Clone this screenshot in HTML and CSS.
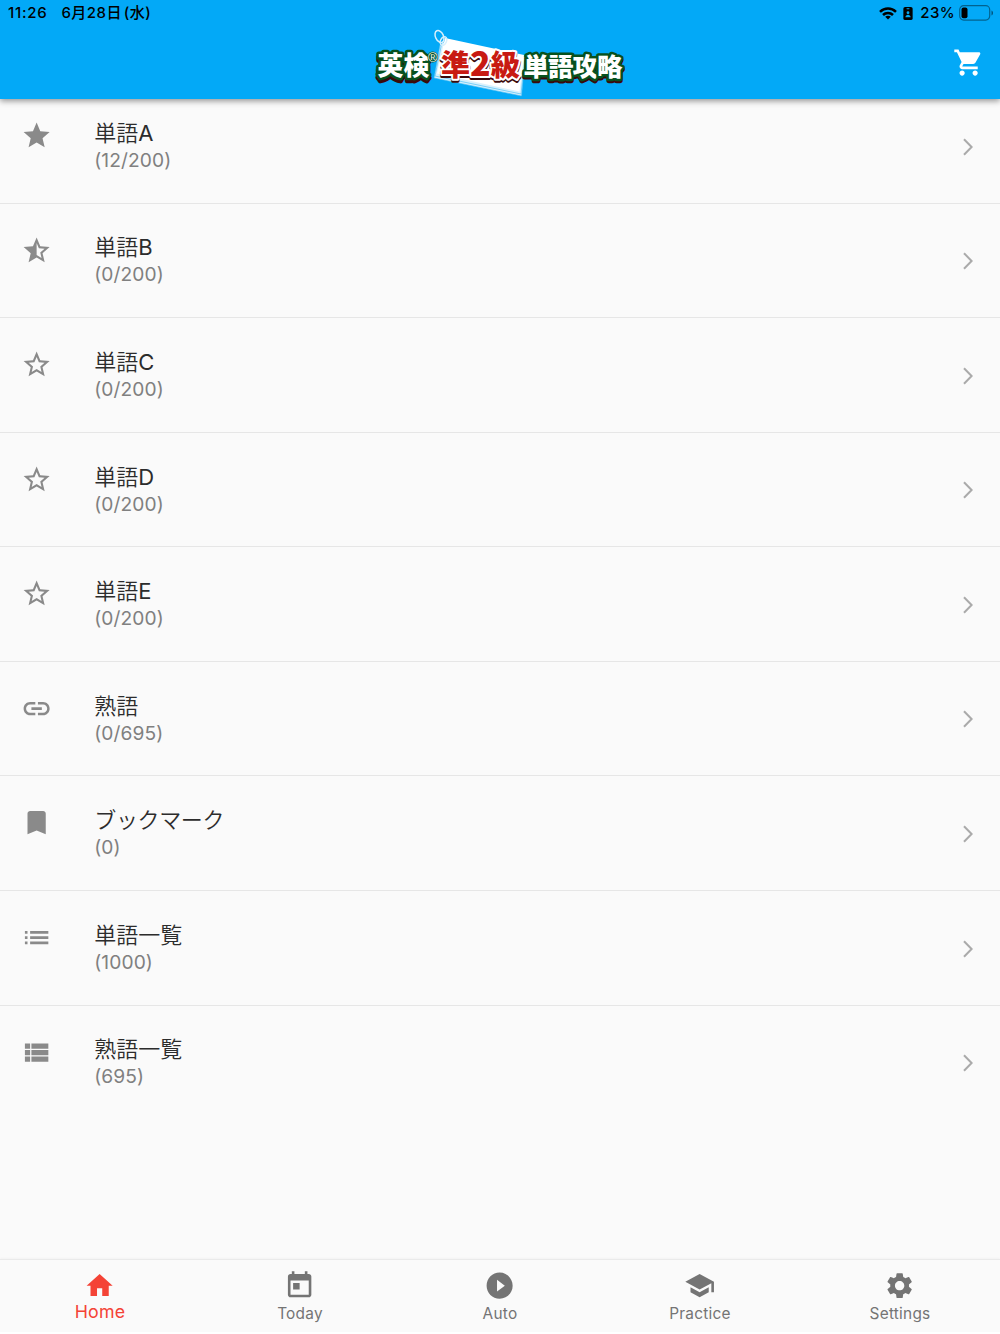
FILE: index.html
```html
<!DOCTYPE html>
<html lang="ja">
<head>
<meta charset="utf-8">
<title>英検準2級 単語攻略</title>
<link rel="stylesheet" href="styles.css">
</head>
<body>
<svg class="defs" aria-hidden="true">
  <symbol id="star" viewBox="0 0 24 24"><path d="M12 17.27L18.18 21l-1.64-7.03L22 9.24l-7.19-.61L12 2 9.19 8.63 2 9.24l5.46 4.73L5.82 21z"/></symbol>
  <symbol id="star-half" viewBox="0 0 24 24"><path d="M22 9.24l-7.19-.62L12 2 9.19 8.63 2 9.24l5.46 4.73L5.82 21 12 17.27 18.18 21l-1.63-7.03L22 9.24zM12 15.4V6.1l1.71 4.04 4.38.38-3.32 2.88 1 4.28L12 15.4z"/></symbol>
  <symbol id="star-outline" viewBox="0 0 24 24"><path d="M22 9.24l-7.19-.62L12 2 9.19 8.63 2 9.24l5.46 4.73L5.82 21 12 17.27 18.18 21l-1.63-7.03L22 9.24zM12 15.4l-3.76 2.27 1-4.28-3.32-2.88 4.38-.38L12 6.1l1.71 4.04 4.38.38-3.32 2.88 1 4.28L12 15.4z"/></symbol>
  <symbol id="link" viewBox="0 0 24 24"><path d="M3.9 12c0-1.71 1.39-3.1 3.1-3.1h4V7H7c-2.76 0-5 2.24-5 5s2.24 5 5 5h4v-1.900H7c-1.710 0-3.100-1.390-3.100-3.100zM8 13h8v-2H8v2zm9-6h-4v1.900h4c1.710 0 3.100 1.390 3.100 3.100s-1.390 3.100-3.100 3.100h-4V17h4c2.760 0 5-2.240 5-5s-2.240-5-5-5z"/></symbol>
  <symbol id="bookmark" viewBox="0 0 24 24"><path d="M17 3H7c-1.100 0-2 .9-2 2v16l7-3 7 3V5c0-1.100-.9-2-2-2z"/></symbol>
  <symbol id="list" viewBox="0 0 24 24"><path d="M3 13h2v-2H3v2zm0 4h2v-2H3v2zm0-8h2V7H3v2zm4 4h14v-2H7v2zm0 4h14v-2H7v2zM7 7v2h14V7H7z"/></symbol>
  <symbol id="view-list" viewBox="0 0 24 24"><path d="M3 14h4v-4H3v4zm0 5h4v-4H3v4zM3 9h4V5H3v4zm5 5h13v-4H8v4zm0 5h13v-4H8v4zM8 5v4h13V5H8z"/></symbol>
  <symbol id="chevron" viewBox="0 0 12 20"><path d="M2 2.200 9.600 10 2 17.800" fill="none" stroke="currentColor" stroke-width="2"/></symbol>
</svg>

<div class="app">
  <header class="appbar">
    <div class="status">
      <span class="clock">11:26</span>
      <span class="date">6月28日<span class="weekday">(水)</span></span>
      <svg class="wifi" viewBox="0 0 18 13"><g fill="none" stroke="#000" stroke-width="2.500"><path d="M1 4.800C5.500.4 12.500.4 17 4.800"/><path d="M4 8C6.800 5.200 11.200 5.200 14 8"/></g><path d="M6.200 9.700C7.800 8.300 10.200 8.300 11.800 9.700L9 12.500z"/></svg>
      <svg class="badge" viewBox="0 0 10 14"><rect width="10" height="14" rx="2"/><g fill="#03a9f4"><rect x="3.300" y="1.400" width="3.400" height="1" rx=".5"/><circle cx="5" cy="6.200" r="1.500"/><path d="M2.200 11c0-3.600 5.600-3.600 5.600 0z"/></g></svg>
      <span class="percent">23%</span>
      <svg class="battery" viewBox="0 0 35 16"><rect x=".7" y=".7" width="30" height="14.400" rx="4" fill="none" stroke="#000" stroke-opacity=".42" stroke-width="1.200"/><rect x="2.500" y="2.600" width="6" height="10.600" rx="2"/><path d="M32.500 5.500c2 .8 2 4.200 0 5z" fill-opacity=".5"/></svg>
    </div>
    <svg class="logo" viewBox="0 0 260 85" role="img" aria-label="英検準2級 単語攻略">
      <g fill="#d9f1fd" stroke="#3db9f3" stroke-width=".6">
        <path d="M70 20 64 53 151.500 71 155 34z"/>
        <path d="M72 17 65 51 151 69 155 32z"/>
      </g>
      <path d="M75 13 67 48.500 149.500 66.500 154 30z" fill="#fff"/>
      <g fill="none" stroke="#d7effb" stroke-width="1.500"><ellipse cx="69.500" cy="11.500" rx="4" ry="6.300" transform="rotate(-25 69.500 11.500)"/><ellipse cx="73.500" cy="16" rx="3" ry="4.500" transform="rotate(25 73.500 16)"/></g>
      <g class="logo-text">
        <g class="logo-shadow"><text x="7.500" y="53" font-size="26" textLength="52">英検</text><text x="153.500" y="53" font-size="25.500" textLength="99">単語攻略</text></g>
        <g class="logo-green"><text x="7.500" y="50.300" font-size="26" textLength="52">英検</text><text x="153.500" y="50.500" font-size="25.500" textLength="99">単語攻略</text></g>
        <text class="logo-shadow narrow" x="71" y="53" font-size="29">準<tspan font-size="34">2</tspan>級</text>
        <text class="logo-red" x="71" y="51" font-size="29">準<tspan font-size="34">2</tspan>級</text>
        <text class="logo-mark" x="58" y="37" font-size="13">®</text>
      </g>
    </svg>
    <svg class="cart" viewBox="0 0 24 24"><path d="M7 18c-1.100 0-1.990.9-1.990 2S5.900 22 7 22s2-.9 2-2-.9-2-2-2zM1 2v2h2l3.600 7.590-1.350 2.450c-.16.280-.25.610-.25.960 0 1.100.9 2 2 2h12v-2H7.420c-.14 0-.25-.110-.25-.250l.03-.120.900-1.630h7.450c.75 0 1.410-.410 1.750-1.030l3.580-6.490c.08-.140.120-.310.120-.480 0-.550-.450-1-1-1H5.210l-.94-2H1zm16 16c-1.100 0-1.990.9-1.990 2s.890 2 1.990 2 2-.9 2-2-.9-2-2-2z"/></svg>
  </header>

  <main class="list">
    <div class="row"><svg class="lead"><use href="#star"/></svg><div class="text"><div class="title">単語<span class="latin">A</span></div><div class="count">(12/200)</div></div><svg class="chev"><use href="#chevron"/></svg></div>
    <div class="row"><svg class="lead"><use href="#star-half"/></svg><div class="text"><div class="title">単語<span class="latin">B</span></div><div class="count">(0/200)</div></div><svg class="chev"><use href="#chevron"/></svg></div>
    <div class="row"><svg class="lead"><use href="#star-outline"/></svg><div class="text"><div class="title">単語<span class="latin">C</span></div><div class="count">(0/200)</div></div><svg class="chev"><use href="#chevron"/></svg></div>
    <div class="row"><svg class="lead"><use href="#star-outline"/></svg><div class="text"><div class="title">単語<span class="latin">D</span></div><div class="count">(0/200)</div></div><svg class="chev"><use href="#chevron"/></svg></div>
    <div class="row"><svg class="lead"><use href="#star-outline"/></svg><div class="text"><div class="title">単語<span class="latin">E</span></div><div class="count">(0/200)</div></div><svg class="chev"><use href="#chevron"/></svg></div>
    <div class="row"><svg class="lead"><use href="#link"/></svg><div class="text"><div class="title">熟語</div><div class="count">(0/695)</div></div><svg class="chev"><use href="#chevron"/></svg></div>
    <div class="row"><svg class="lead"><use href="#bookmark"/></svg><div class="text"><div class="title kana">ブックマーク</div><div class="count">(0)</div></div><svg class="chev"><use href="#chevron"/></svg></div>
    <div class="row"><svg class="lead"><use href="#list"/></svg><div class="text"><div class="title">単語一覧</div><div class="count">(1000)</div></div><svg class="chev"><use href="#chevron"/></svg></div>
    <div class="row"><svg class="lead"><use href="#view-list"/></svg><div class="text"><div class="title">熟語一覧</div><div class="count">(695)</div></div><svg class="chev"><use href="#chevron"/></svg></div>
  </main>

  <nav class="tabs">
    <div class="tab active"><svg viewBox="0 0 24 24"><path d="M10 20v-6h4v6h5v-8h3L12 3 2 12h3v8z"/></svg><span>Home</span></div>
    <div class="tab"><svg viewBox="0 0 24 24"><path d="M19 3h-1V1h-2v2H8V1H6v2H5c-1.110 0-1.990.9-1.990 2L3 19c0 1.100.890 2 2 2h14c1.100 0 2-.9 2-2V5c0-1.100-.9-2-2-2zm0 16H5V8h14v11zM7 10h5v5H7z"/></svg><span>Today</span></div>
    <div class="tab"><svg viewBox="0 0 24 24"><path d="M12 2C6.480 2 2 6.480 2 12s4.480 10 10 10 10-4.480 10-10S17.520 2 12 2zm-2 14.500v-9l6 4.500-6 4.500z"/></svg><span>Auto</span></div>
    <div class="tab"><svg viewBox="0 0 24 24"><path d="M5 13.180v4L12 21l7-3.820v-4L12 17l-7-3.820zM12 3L1 9l11 6 9-4.910V17h2V9L12 3z"/></svg><span>Practice</span></div>
    <div class="tab"><svg viewBox="0 0 24 24"><path d="M19.140 12.940c.04-.3.060-.610.060-.940 0-.320-.020-.640-.070-.940l2.030-1.580c.18-.140.230-.410.120-.610l-1.920-3.320c-.12-.220-.370-.290-.590-.220l-2.390.960c-.5-.380-1.030-.7-1.620-.940l-.36-2.540c-.04-.240-.240-.410-.480-.410h-3.840c-.24 0-.430.170-.470.410l-.36 2.540c-.59.240-1.130.570-1.620.940l-2.390-.960c-.22-.080-.470 0-.590.220L2.740 8.870c-.12.210-.080.470.120.610l2.030 1.580c-.05.300-.09.630-.09.940s.02.640.07.940l-2.030 1.580c-.18.140-.230.410-.120.610l1.920 3.320c.12.220.37.290.59.220l2.390-.960c.5.380 1.030.7 1.620.94l.36 2.540c.05.240.24.410.48.410h3.840c.24 0 .44-.170.47-.410l.36-2.540c.59-.240 1.130-.560 1.620-.940l2.390.96c.22.080.47 0 .59-.220l1.920-3.320c.12-.220.07-.470-.120-.610l-2.010-1.580zM12 15.600c-1.980 0-3.600-1.620-3.600-3.600s1.620-3.600 3.600-3.600 3.600 1.620 3.600 3.600-1.620 3.600-3.600 3.600z"/></svg><span>Settings</span></div>
  </nav>
</div>
</body>
</html>
```
FILE: styles.css
```css
* { box-sizing: border-box; }

body {
  margin: 0;
  background: #fff;
  font-family: "Inter", "Noto Sans CJK JP", sans-serif;
}

.defs { display: none; }

.app {
  display: flex;
  flex-direction: column;
  height: 1332px;
  background: #fafafa;
  overflow: hidden;
}

.appbar {
  flex: none;
  display: grid;
  grid-template: 27px 72px / 1fr 260px 1fr;
  height: 99px;
  background: #03a9f7;
  box-shadow: 0 2px 6px rgba(0, 0, 0, .42);
  z-index: 1;
}

.status {
  grid-column: 1 / -1;
  display: flex;
  align-items: center;
  padding: 0 6px 0 8px;
  font-size: 15px;
  font-weight: 500;
  line-height: 26px;
  height: 26px;
  color: #000;
}

.clock { letter-spacing: .75px; }
.date { margin-left: 14px; letter-spacing: .45px; }
.weekday { margin-left: 2px; }
.wifi { width: 18px; height: 13px; margin-left: auto; }
.badge { width: 10px; height: 13px; margin-left: 6px; }
.percent { margin-left: 7px; letter-spacing: .4px; }
.battery { width: 35px; height: 16px; margin-left: 4px; margin-right: 0; }

.logo {
  grid-column: 2;
  width: 260px;
  height: 85px;
  margin-top: -2px;
}

.logo-text {
  font-family: "Noto Sans CJK JP", sans-serif;
  font-weight: 900;
  stroke-linejoin: round;
  paint-order: stroke;
}

.logo-shadow { fill: #3b090b; stroke: #3b090b; stroke-width: 5px; }
.logo-shadow.narrow { stroke-width: 4px; }
.logo-green { fill: #fff; stroke: #07511f; stroke-width: 5px; }
.logo-red { fill: #c81a12; stroke: #fff; stroke-width: 4px; }
.logo-mark { fill: #fff; stroke: #07511f; stroke-width: 1.5px; font-family: "Liberation Sans", sans-serif; font-weight: 400; }

.cart {
  grid-column: 3;
  justify-self: end;
  width: 31.25px;
  height: 31.25px;
  margin: 20px 15.8px 0 0;
  fill: #fff;
}

.list {
  flex: 1;
  margin-top: -10px;
}

.row {
  display: flex;
  height: 114.58px;
  padding: 0 26px 0 20.8px;
  border-bottom: 1.3px solid #e6e6e6;
}

.row:last-child { border-bottom: 0; }

.lead {
  width: 31.25px;
  height: 31.25px;
  margin-top: 31px;
  fill: #8a8a8a;
}

.text {
  flex: 1;
  margin-left: 42.2px;
  padding-top: 28.8px;
}

.title {
  height: 28px;
  line-height: 30px;
  font-size: 22px;
  font-weight: 350;
  color: #2c2c2c;
}

.kana { letter-spacing: -.35px; }

.latin { font-weight: 400; }

.count {
  line-height: 28px;
  font-size: 19.2px;
  letter-spacing: .1px;
  color: #808080;
}

.chev {
  width: 12px;
  height: 20px;
  margin-top: 47.5px;
  color: #aaa;
}

.tabs {
  flex: none;
  display: grid;
  grid-template-columns: repeat(5, 1fr);
  height: 73px;
  border-top: 1px solid #eaeaea;
  box-shadow: 0 -1px 2px rgba(0, 0, 0, .03);
}

.tab {
  display: flex;
  flex-direction: column;
  align-items: center;
  padding-top: 10px;
  color: #747474;
}

.tab svg {
  width: 31.25px;
  height: 31.25px;
  fill: currentColor;
}

.tab span {
  margin-top: 3px;
  line-height: 20px;
  font-size: 15.4px;
  letter-spacing: .25px;
}

.tab.active { color: #f44336; }

.tab.active span {
  margin-top: 1px;
  font-size: 17.8px;
  letter-spacing: .2px;
}
```
